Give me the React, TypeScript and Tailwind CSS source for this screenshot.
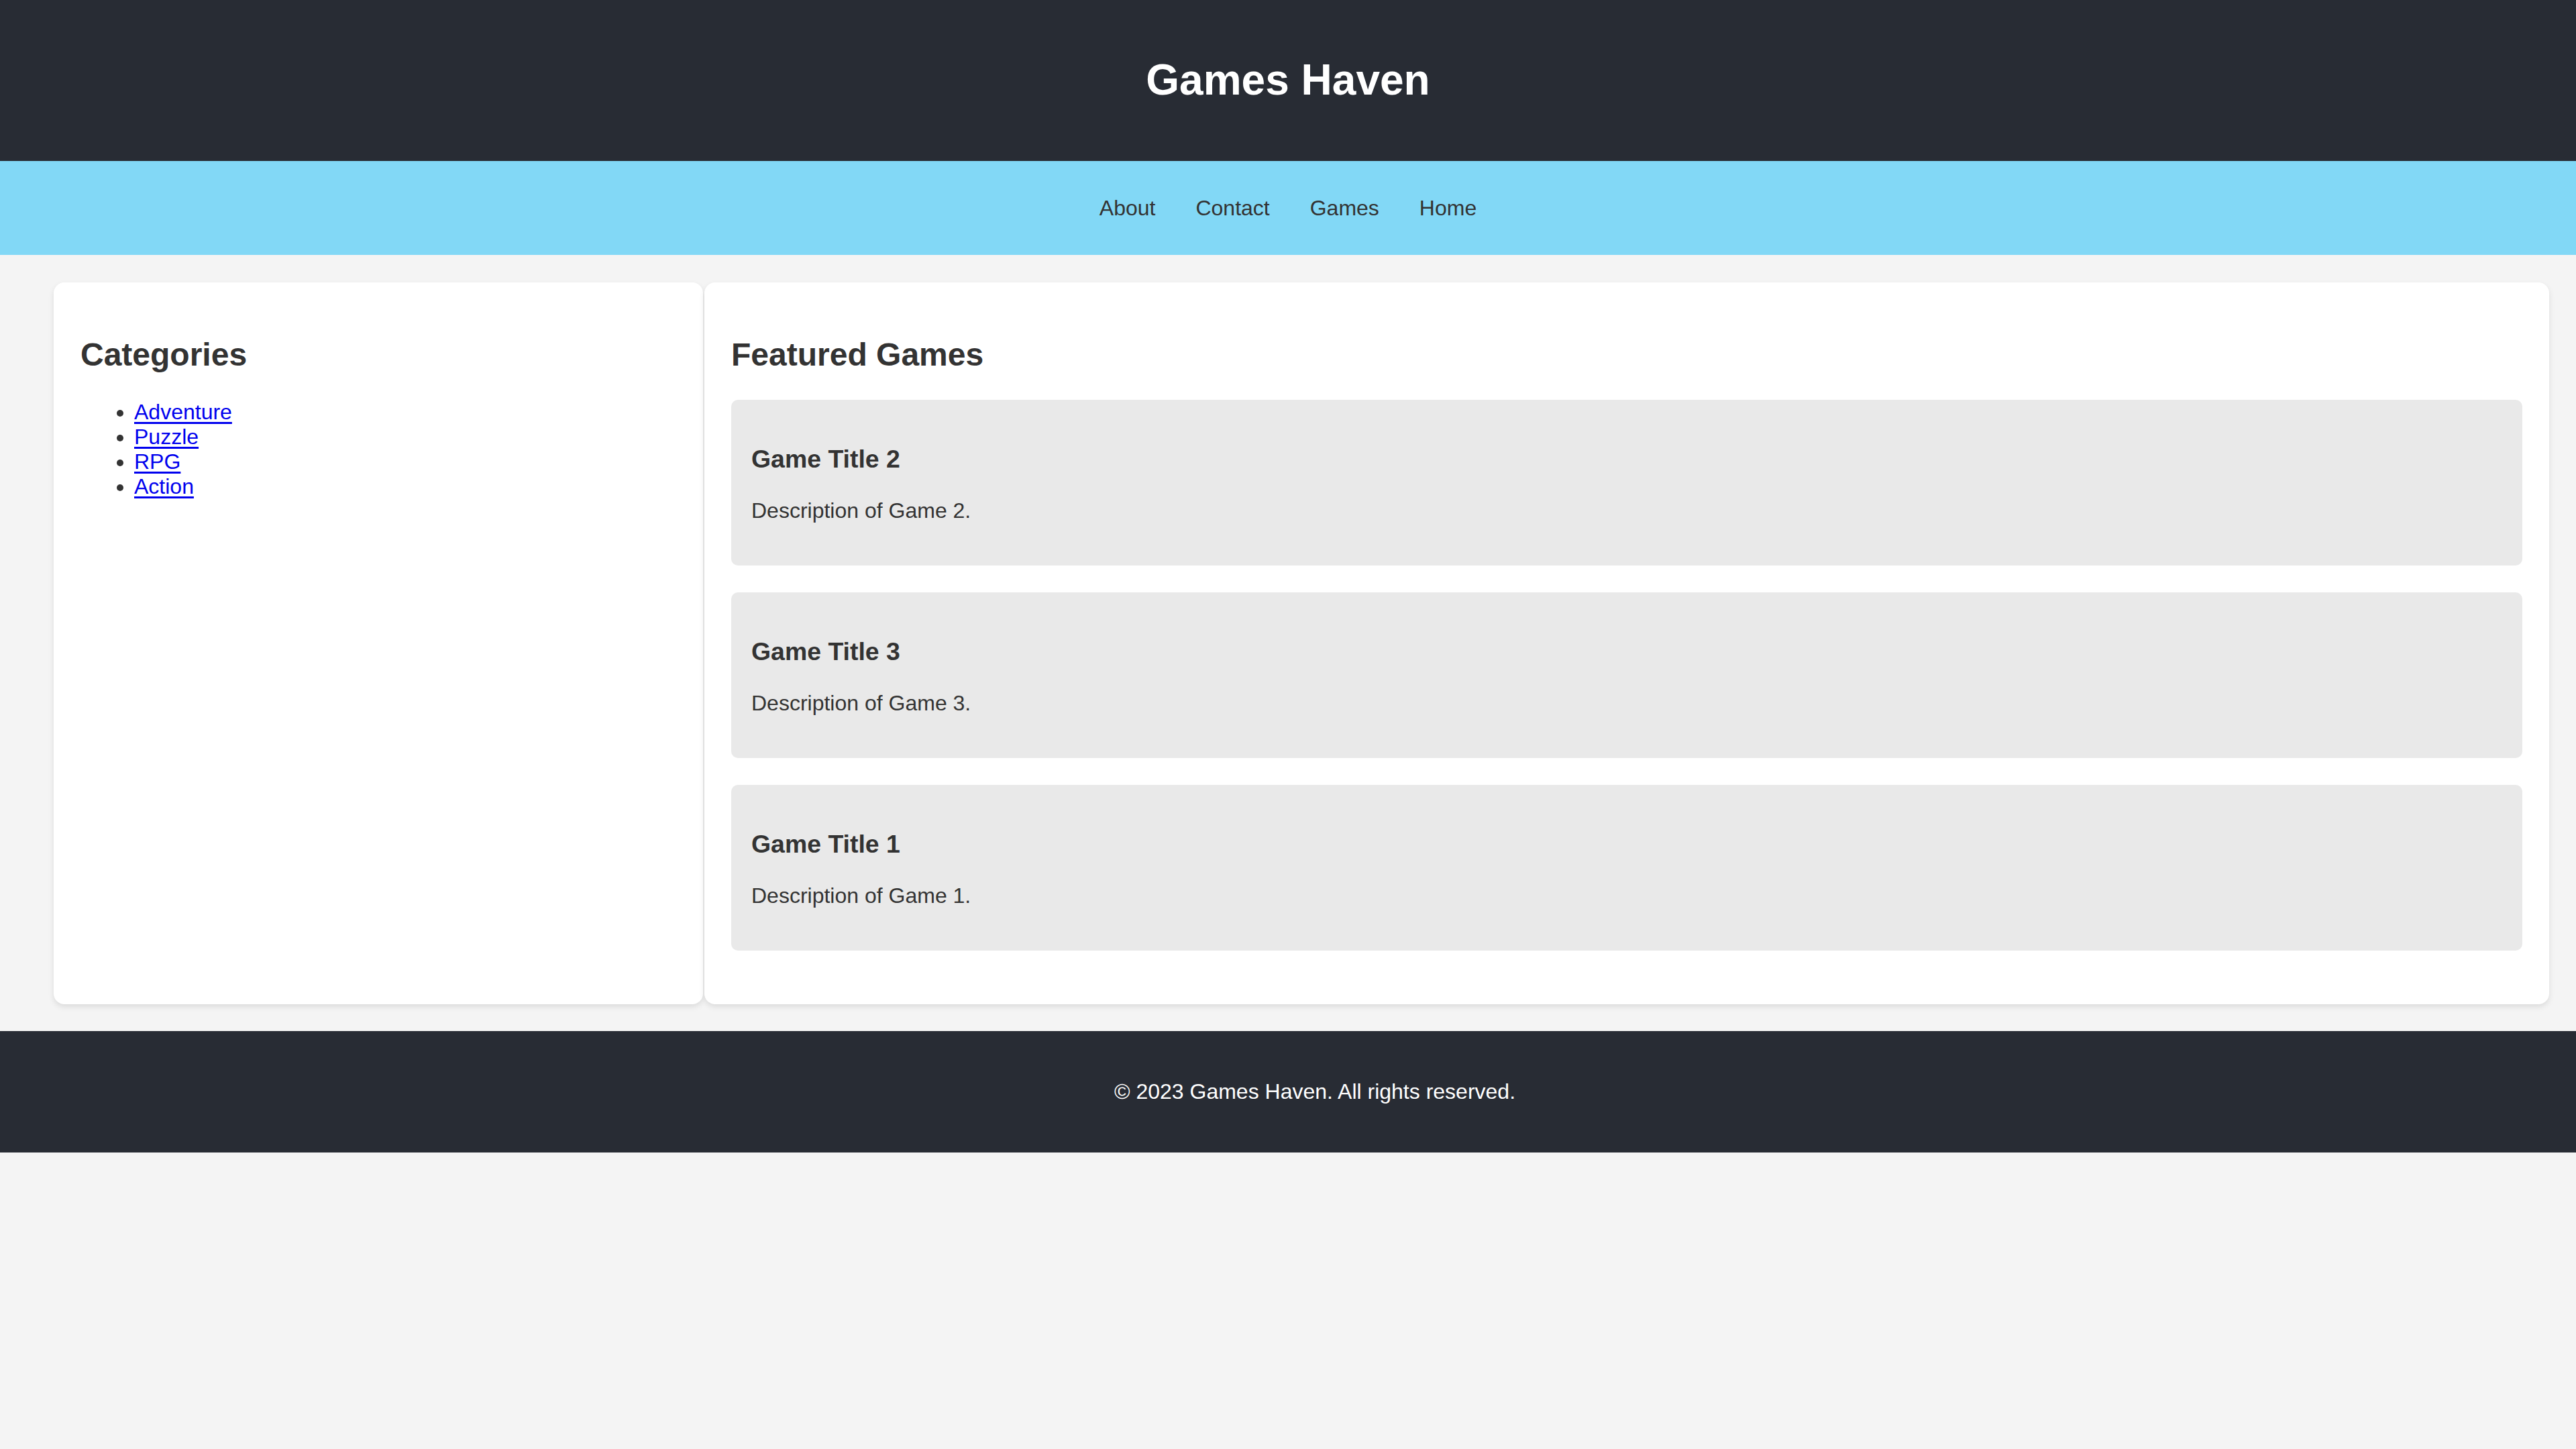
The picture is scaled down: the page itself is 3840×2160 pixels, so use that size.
import React from "react";

const games = [
  { title: "Game Title 2", desc: "Description of Game 2." },
  { title: "Game Title 3", desc: "Description of Game 3." },
  { title: "Game Title 1", desc: "Description of Game 1." },
];

const categories = ["Adventure", "Puzzle", "RPG", "Action"];

export default function App() {
  return (
    <div
      className="min-h-screen bg-[#f4f4f4] text-[#333333]"
      style={{ fontFamily: '"Liberation Sans", Arial, sans-serif' }}
    >
      <header className="h-[240px] bg-[#282c34] flex items-center justify-center">
        <h1 className="text-[64px] leading-[1.15] font-bold text-white">Games Haven</h1>
      </header>
      <nav className="h-[140px] bg-[#82d8f6] flex items-center justify-center gap-[60px]">
        {["About", "Contact", "Games", "Home"].map((n) => (
          <a key={n} className="text-[32px] leading-[1.15] text-[#333333]">
            {n}
          </a>
        ))}
      </nav>
      <div className="flex items-stretch pl-[80px] pr-[40px] pt-[41px] pb-[40px] gap-[2px]">
        <aside className="w-[968px] shrink-0 bg-white rounded-[16px] shadow-[0_4px_8px_rgba(0,0,0,0.1)] p-[40px]">
          <h2 className="text-[48px] leading-[1.15] font-bold mt-[40px] mb-[40px]">Categories</h2>
          <ul className="list-disc pl-[80px] text-[32px] leading-[1.15]">
            {categories.map((c) => (
              <li key={c}>
                <a className="text-[#0000ee] underline underline-offset-[4px] decoration-[3px]">{c}</a>
              </li>
            ))}
          </ul>
        </aside>
        <main className="flex-1 bg-white rounded-[16px] shadow-[0_4px_8px_rgba(0,0,0,0.1)] p-[40px]">
          <h2 className="text-[48px] leading-[1.15] font-bold mt-[40px] mb-[40px]">Featured Games</h2>
          {games.map((g) => (
            <div key={g.title} className="bg-[#e9e9e9] rounded-[10px] px-[30px] pt-[67px] pb-[63px] mb-[40px]">
              <h3 className="text-[37.44px] leading-[1.15] font-bold">{g.title}</h3>
              <p className="text-[32px] leading-[1.15] mt-[37px]">{g.desc}</p>
            </div>
          ))}
        </main>
      </div>
      <footer className="h-[181px] bg-[#282c34] flex items-center justify-center pl-[80px]">
        <p className="text-[32px] leading-[1.15] text-white">© 2023 Games Haven. All rights reserved.</p>
      </footer>
    </div>
  );
}
